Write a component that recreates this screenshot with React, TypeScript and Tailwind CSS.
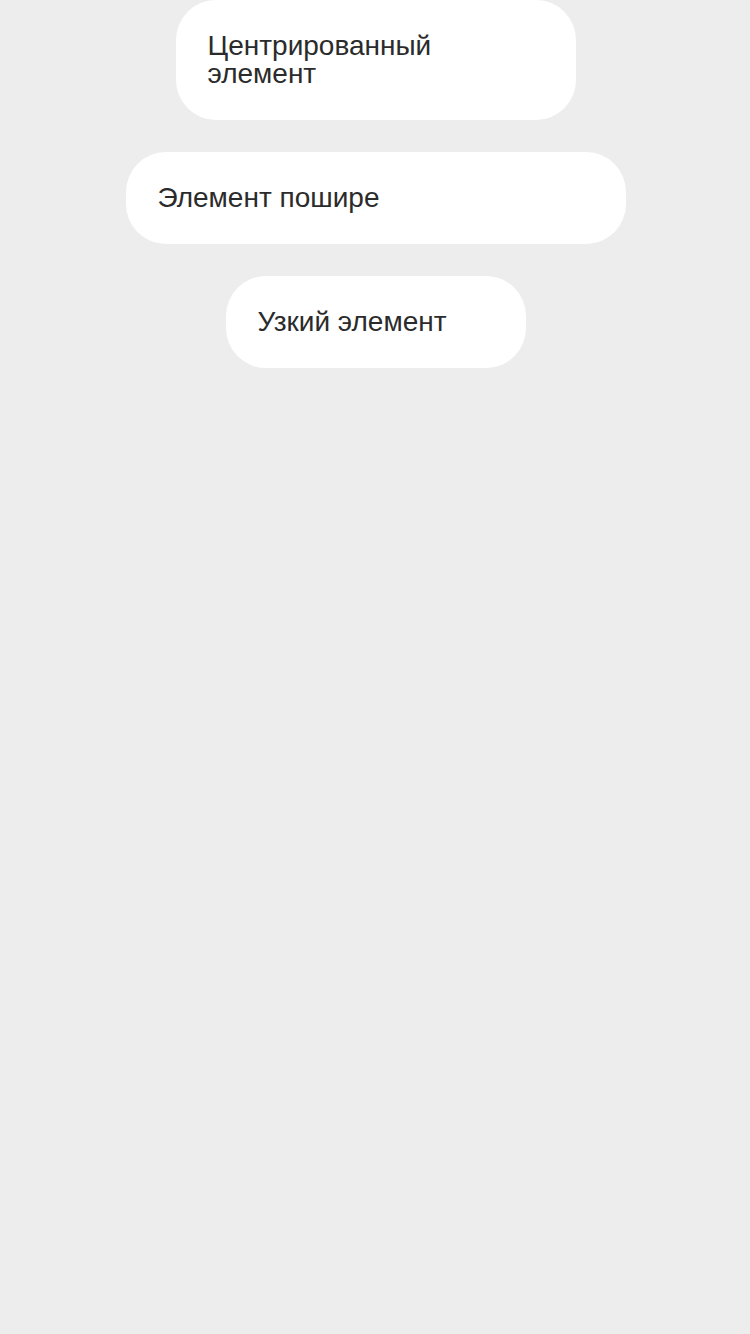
export default function App() {
  return (
    <div className="min-h-[1334px] w-[750px] bg-[#ededed] flex flex-col items-center gap-8 pl-[1px] text-[#2b2b2b]" style={{ fontFamily: '"Liberation Sans", Arial, sans-serif' }}>
      <div className="w-[400px] bg-white rounded-[40px] px-8 py-8 text-[28px] leading-[28px]">
        Центрированный элемент
      </div>
      <div className="w-[500px] bg-white rounded-[40px] px-8 py-8 text-[28px] leading-[28px]">
        Элемент пошире
      </div>
      <div className="w-[300px] bg-white rounded-[40px] px-8 py-8 text-[28px] leading-[28px]">
        Узкий элемент
      </div>
    </div>
  );
}
